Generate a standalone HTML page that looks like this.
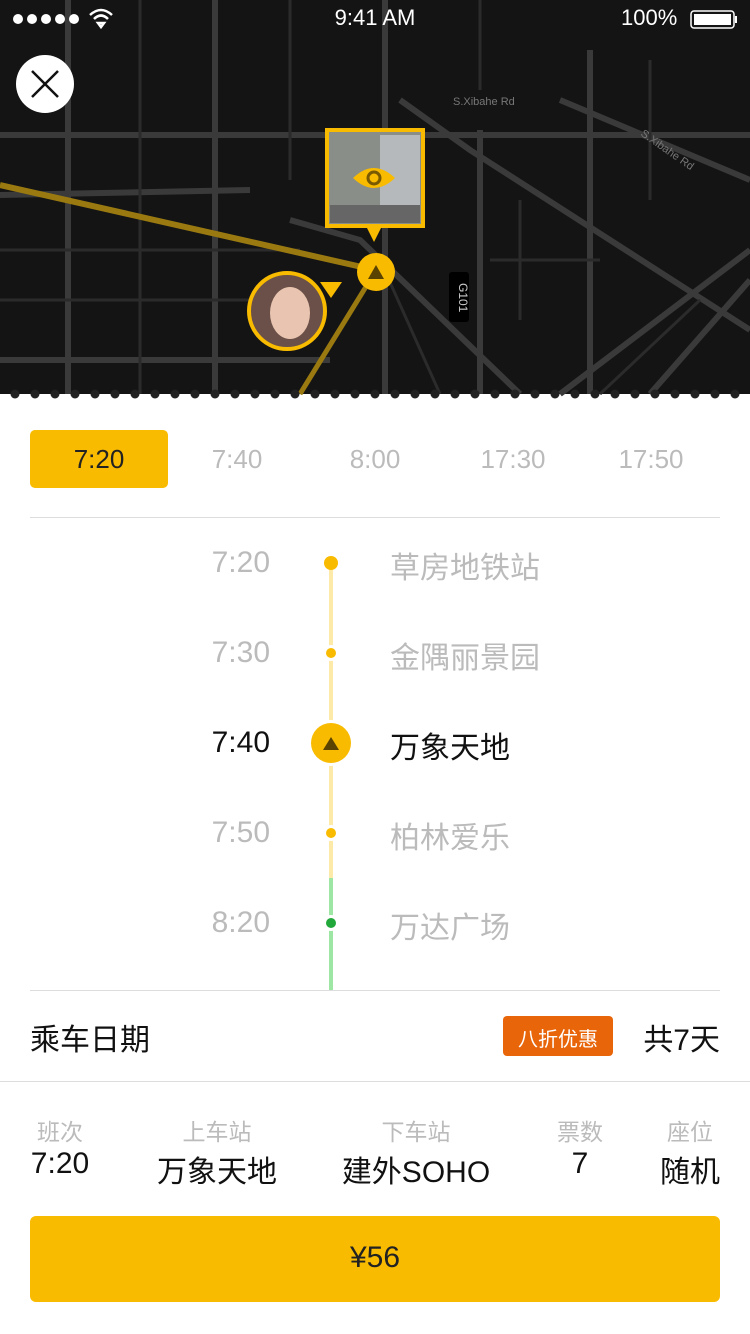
<!DOCTYPE html>
<html><head><meta charset="utf-8"><style>
*{margin:0;padding:0;box-sizing:border-box}
body{width:750px;height:1334px;background:#fff;position:relative;overflow:hidden;font-family:"Liberation Sans","Noto Sans CJK SC",sans-serif}
.a{position:absolute}
.t{position:absolute;white-space:nowrap}
</style></head><body>
<svg class="a" style="left:0;top:0" width="750" height="400" viewBox="0 0 750 400">
<rect width="750" height="394" fill="#141414"/>
<g stroke="#3a3a3a" fill="none" stroke-width="6">
<path d="M0 135 H750"/>
<path d="M0 195 L250 190"/><path d="M215 0 V394"/><path d="M68 0 V394"/>
<path d="M385 0 V394"/><path d="M0 360 H330"/>
<path d="M290 220 L360 240 L520 394"/>
<path d="M560 100 L750 180"/>
<path d="M750 250 L560 394"/>
<path d="M400 100 L470 150 L750 330"/>
<path d="M480 130 V394"/><path d="M590 50 V394"/>
<path d="M650 394 L750 280"/>
</g>
<g stroke="#2b2b2b" fill="none" stroke-width="3">
<path d="M0 250 H300"/><path d="M0 300 H300"/><path d="M140 0 V394"/><path d="M290 0 V180"/>
<path d="M480 0 V90"/><path d="M650 60 V200"/><path d="M490 260 H600"/><path d="M520 200 V320"/>
<path d="M380 260 L440 394"/><path d="M600 394 L700 300"/>
</g>
<text x="453" y="105" fill="#777" font-size="11" font-family="Liberation Sans">S.Xibahe Rd</text>
<text x="640" y="135" fill="#777" font-size="11" font-family="Liberation Sans" transform="rotate(35 640 135)">S.Xibahe Rd</text>
<rect x="449" y="272" width="20" height="50" rx="3" fill="#000"/>
<text x="459" y="283" fill="#ccc" font-size="12" font-family="Liberation Sans" transform="rotate(90 459 283)">G101</text>
<path d="M0 185 L375 270" stroke="#9a7a10" stroke-width="6"/>
<path d="M375 272 L300 394" stroke="#9a7a10" stroke-width="5"/>
<rect x="327" y="130" width="96" height="96" fill="#8a8e88" stroke="#f8bb00" stroke-width="4"/>
<rect x="380" y="135" width="40" height="75" fill="#b5b9bc"/>
<rect x="330" y="205" width="90" height="18" fill="#666"/>
<path d="M353 178 Q374 158 395 178 Q374 198 353 178Z" fill="#f8bb00"/><circle cx="374" cy="178" r="6" fill="none" stroke="#7a5a00" stroke-width="3"/>
<path d="M367 228 L381 228 L374 242Z" fill="#f8bb00"/>
<circle cx="376" cy="272" r="19" fill="#f8bb00"/><path d="M368 279 L384 279 L376 265Z" fill="#5a4300"/>
<circle cx="287" cy="311" r="38" fill="#6a5048" stroke="#f8bb00" stroke-width="4"/>
<ellipse cx="290" cy="313" rx="20" ry="26" fill="#e9c4b0"/>
<path d="M320 282 L342 282 L331 298Z" fill="#f8bb00"/>
<circle cx="45" cy="84" r="29" fill="#fff"/>
<path d="M32 71 L58 97 M58 71 L32 97" stroke="#111" stroke-width="2.5"/>
<g fill="#222">
<circle cx="15" cy="394" r="4.5"/><circle cx="35" cy="394" r="4.5"/><circle cx="55" cy="394" r="4.5"/><circle cx="75" cy="394" r="4.5"/><circle cx="95" cy="394" r="4.5"/><circle cx="115" cy="394" r="4.5"/><circle cx="135" cy="394" r="4.5"/><circle cx="155" cy="394" r="4.5"/><circle cx="175" cy="394" r="4.5"/><circle cx="195" cy="394" r="4.5"/><circle cx="215" cy="394" r="4.5"/><circle cx="235" cy="394" r="4.5"/><circle cx="255" cy="394" r="4.5"/><circle cx="275" cy="394" r="4.5"/><circle cx="295" cy="394" r="4.5"/><circle cx="315" cy="394" r="4.5"/><circle cx="335" cy="394" r="4.5"/><circle cx="355" cy="394" r="4.5"/><circle cx="375" cy="394" r="4.5"/><circle cx="395" cy="394" r="4.5"/><circle cx="415" cy="394" r="4.5"/><circle cx="435" cy="394" r="4.5"/><circle cx="455" cy="394" r="4.5"/><circle cx="475" cy="394" r="4.5"/><circle cx="495" cy="394" r="4.5"/><circle cx="515" cy="394" r="4.5"/><circle cx="535" cy="394" r="4.5"/><circle cx="555" cy="394" r="4.5"/><circle cx="575" cy="394" r="4.5"/><circle cx="595" cy="394" r="4.5"/><circle cx="615" cy="394" r="4.5"/><circle cx="635" cy="394" r="4.5"/><circle cx="655" cy="394" r="4.5"/><circle cx="675" cy="394" r="4.5"/><circle cx="695" cy="394" r="4.5"/><circle cx="715" cy="394" r="4.5"/><circle cx="735" cy="394" r="4.5"/>
</g>
<g fill="#fff"><circle cx="18" cy="19" r="5"/><circle cx="32" cy="19" r="5"/><circle cx="46" cy="19" r="5"/><circle cx="60" cy="19" r="5"/><circle cx="74" cy="19" r="5"/></g>
<path d="M90 15 Q101 5 112 15 M94 19 Q101 12 108 19 M98 23 L101 27 L104 23Z" stroke="#fff" stroke-width="2.5" fill="none"/>
<rect x="691" y="11" width="43" height="17" rx="3" fill="none" stroke="#fff" stroke-width="1.5"/>
<rect x="694" y="14" width="37" height="11" fill="#fff"/><rect x="735" y="16" width="2" height="7" fill="#fff"/>
</svg>
<div class="t" style="left:0;width:750px;text-align:center;top:5px;font-size:22px;color:#fff">9:41 AM</div>
<div class="t" style="left:621px;top:5px;font-size:22px;color:#fff">100%</div>

<div class="a" style="left:30px;top:430px;width:138px;height:58px;background:#f8bb00;border-radius:5px"></div>
<div class="t" style="left:30px;width:138px;text-align:center;top:444px;font-size:26px;color:#222">7:20</div>
<div class="t" style="left:168px;width:138px;text-align:center;top:444px;font-size:26px;color:#bbb">7:40</div>
<div class="t" style="left:306px;width:138px;text-align:center;top:444px;font-size:26px;color:#bbb">8:00</div>
<div class="t" style="left:444px;width:138px;text-align:center;top:444px;font-size:26px;color:#bbb">17:30</div>
<div class="t" style="left:582px;width:138px;text-align:center;top:444px;font-size:26px;color:#bbb">17:50</div>
<div class="a" style="left:30px;top:517px;width:690px;height:1px;background:#ddd"></div>

<div class="a" style="left:329px;top:563px;width:4px;height:315px;background:#fde9a8"></div>
<div class="a" style="left:329px;top:878px;width:4px;height:112px;background:#9ee6a4"></div>
<div class="a" style="left:324px;top:556px;width:14px;height:14px;border-radius:50%;background:#f8bb00"></div>
<div class="a" style="left:326px;top:648px;width:10px;height:10px;border-radius:50%;background:#f8bb00;box-shadow:0 0 0 3px #fff"></div>
<div class="a" style="left:311px;top:723px;width:40px;height:40px;border-radius:50%;background:#f8bb00;box-shadow:0 0 0 3px #fff"></div>
<svg class="a" style="left:311px;top:723px" width="40" height="40"><path d="M12 27 L28 27 L20 14Z" fill="#5a4300"/></svg>
<div class="a" style="left:326px;top:828px;width:10px;height:10px;border-radius:50%;background:#f8bb00;box-shadow:0 0 0 3px #fff"></div>
<div class="a" style="left:326px;top:918px;width:10px;height:10px;border-radius:50%;background:#22a83a;box-shadow:0 0 0 3px #fff"></div>

<div class="t" style="left:170px;width:100px;text-align:right;top:546px;font-size:30px;color:#bbb">7:20</div>
<div class="t" style="left:170px;width:100px;text-align:right;top:636px;font-size:30px;color:#bbb">7:30</div>
<div class="t" style="left:170px;width:100px;text-align:right;top:726px;font-size:30px;color:#111">7:40</div>
<div class="t" style="left:170px;width:100px;text-align:right;top:816px;font-size:30px;color:#bbb">7:50</div>
<div class="t" style="left:170px;width:100px;text-align:right;top:906px;font-size:30px;color:#bbb">8:20</div>
<div class="t" style="left:390px;top:543px;font-size:30px;color:#bbb">草房地铁站</div>
<div class="t" style="left:390px;top:633px;font-size:30px;color:#bbb">金隅丽景园</div>
<div class="t" style="left:390px;top:723px;font-size:30px;color:#111">万象天地</div>
<div class="t" style="left:390px;top:813px;font-size:30px;color:#bbb">柏林爱乐</div>
<div class="t" style="left:390px;top:903px;font-size:30px;color:#bbb">万达广场</div>
<div class="a" style="left:30px;top:990px;width:690px;height:1px;background:#ddd"></div>

<div class="t" style="left:30px;top:1015px;font-size:30px;color:#111">乘车日期</div>
<div class="a" style="left:503px;top:1016px;width:110px;height:40px;border-radius:4px;background:#e8650a"></div>
<div class="t" style="left:503px;width:110px;text-align:center;top:1023px;font-size:20px;color:#fff">八折优惠</div>
<div class="t" style="left:600px;width:120px;text-align:right;top:1015px;font-size:30px;color:#111">共7天</div>
<div class="a" style="left:0;top:1081px;width:750px;height:1px;background:#ddd"></div>

<div class="t" style="left:10px;width:100px;text-align:center;top:1113px;font-size:23px;color:#bbb">班次</div>
<div class="t" style="left:10px;width:100px;text-align:center;top:1147px;font-size:30px;color:#111">7:20</div>
<div class="t" style="left:137px;width:160px;text-align:center;top:1113px;font-size:23px;color:#bbb">上车站</div>
<div class="t" style="left:137px;width:160px;text-align:center;top:1147px;font-size:30px;color:#111">万象天地</div>
<div class="t" style="left:316px;width:200px;text-align:center;top:1113px;font-size:23px;color:#bbb">下车站</div>
<div class="t" style="left:316px;width:200px;text-align:center;top:1147px;font-size:30px;color:#111">建外SOHO</div>
<div class="t" style="left:530px;width:100px;text-align:center;top:1113px;font-size:23px;color:#bbb">票数</div>
<div class="t" style="left:530px;width:100px;text-align:center;top:1147px;font-size:30px;color:#111">7</div>
<div class="t" style="left:640px;width:100px;text-align:center;top:1113px;font-size:23px;color:#bbb">座位</div>
<div class="t" style="left:620px;width:100px;text-align:right;top:1147px;font-size:30px;color:#111">随机</div>

<div class="a" style="left:30px;top:1216px;width:690px;height:86px;background:#f8bb00;border-radius:6px"></div>
<div class="t" style="left:30px;width:690px;text-align:center;top:1241px;font-size:30px;color:#222">¥56</div>
</body></html>
